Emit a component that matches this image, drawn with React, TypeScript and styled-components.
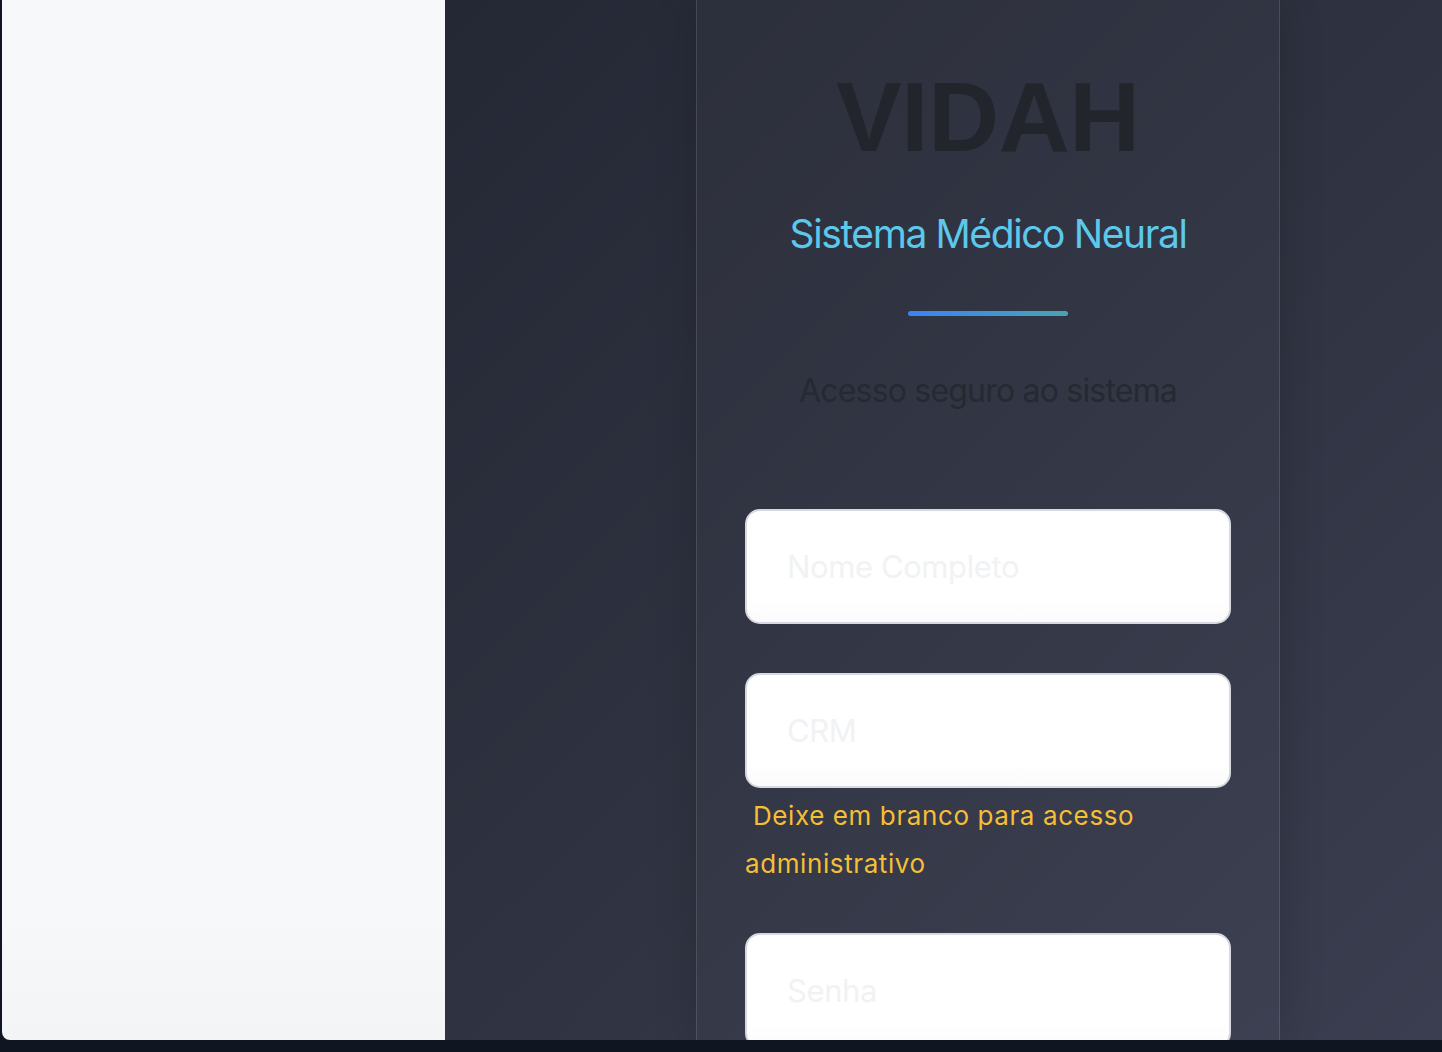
import React from "react";
import styled, { createGlobalStyle } from "styled-components";

const Global = createGlobalStyle`
  html, body {
    margin: 0;
    padding: 0;
    background: #0f1521;
  }
  body {
    font-family: Inter, "Noto Sans", sans-serif;
    overflow: hidden;
  }
  * { box-sizing: border-box; }
`;

const Page = styled.div`
  height: 1052px;
  padding-left: 2px;
  padding-bottom: 12px;
`;

const Shell = styled.div`
  height: 1040px;
  display: grid;
  grid-template-columns: 443px 1fr;
  border-bottom-left-radius: 8px;
  overflow: hidden;
`;

const LightPanel = styled.aside`
  background: linear-gradient(180deg, #f7f8fa 0%, #f7f8fa 88%, #f3f4f6 100%);
`;

const DarkPanel = styled.main`
  background: linear-gradient(135deg, #242835 0%, #2f3240 50%, #3b3e50 100%);
  display: flex;
  align-items: stretch;
  padding-left: 251px;
  overflow: hidden;
`;

const Card = styled.section`
  width: 584px;
  border-left: 1px solid rgba(255, 255, 255, 0.12);
  border-right: 1px solid rgba(255, 255, 255, 0.12);
  background: rgba(255, 255, 255, 0.025);
  box-shadow: 0 0 40px rgba(0, 0, 0, 0.18);
  padding: 0 48px;
  display: flex;
  flex-direction: column;
`;

const Header = styled.header`
  display: flex;
  flex-direction: column;
  align-items: center;
  padding-top: 60px;
`;

const Logo = styled.h1`
  margin: 0;
  font-family: "Liberation Sans", Arial, sans-serif;
  font-weight: 700;
  font-size: 98px;
  line-height: 114px;
  color: #22252c;
  letter-spacing: -0.3px;
`;

const Subtitle = styled.h2`
  margin: 36px 0 0;
  font-family: Inter, sans-serif;
  font-weight: 400;
  font-size: 39px;
  line-height: 48px;
  letter-spacing: -1.4px;
  color: #5bc8ec;
`;

const Divider = styled.div`
  width: 160px;
  height: 5px;
  border-radius: 3px;
  margin-top: 53px;
  background: linear-gradient(90deg, #3b82f6, #4aa3b4);
`;

const Tagline = styled.p`
  margin: 55px 0 0;
  font-family: Inter, sans-serif;
  font-size: 32px;
  line-height: 40px;
  letter-spacing: -0.8px;
  color: #252932;
`;

const Form = styled.form`
  display: flex;
  flex-direction: column;
  margin-top: 98px;
`;

const Field = styled.div<{ $gap?: number }>`
  display: flex;
  flex-direction: column;
  margin-bottom: ${(p) => p.$gap ?? 49}px;
`;

const Input = styled.input`
  width: 100%;
  height: 115px;
  padding: 0 40px;
  border: 2px solid #d6d9e0;
  border-radius: 15px;
  background: linear-gradient(180deg, #ffffff 78%, #fbfbfc 100%);
  font-family: Inter, sans-serif;
  font-size: 31px;
  color: #111827;
  outline: none;
  &::placeholder {
    color: #f1f2f4;
    letter-spacing: -0.4px;
  }
`;

const Hint = styled.small`
  display: block;
  margin-top: 4px;
  font-family: Inter, sans-serif;
  font-size: 26px;
  line-height: 48px;
  letter-spacing: 0.6px;
  color: #f5bf35;
`;

export default function App() {
  return (
    <>
      <Global />
      <Page>
        <Shell>
          <LightPanel />
          <DarkPanel>
            <Card>
              <Header>
                <Logo>VIDAH</Logo>
                <Subtitle>Sistema Médico Neural</Subtitle>
                <Divider />
                <Tagline>Acesso seguro ao sistema</Tagline>
              </Header>
              <Form onSubmit={(e) => e.preventDefault()}>
                <Field>
                  <Input type="text" placeholder="Nome Completo" />
                </Field>
                <Field $gap={45}>
                  <Input type="text" placeholder="CRM" />
                  <Hint>{"\u00a0"}Deixe em branco para acesso administrativo</Hint>
                </Field>
                <Field>
                  <Input type="password" placeholder="Senha" />
                </Field>
              </Form>
            </Card>
          </DarkPanel>
        </Shell>
      </Page>
    </>
  );
}
